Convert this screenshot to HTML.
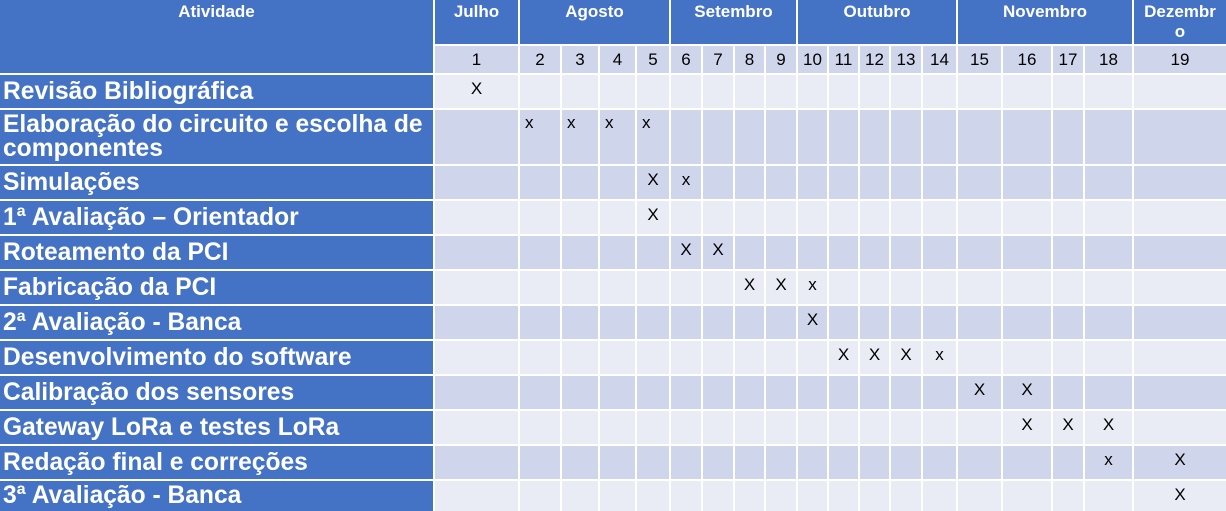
<!DOCTYPE html>
<html><head><meta charset="utf-8"><style>
html,body{margin:0;padding:0;background:#fff;width:1226px;height:511px;overflow:hidden}
.g{display:grid;gap:2px;background:#fff;
grid-template-columns:433px 83px 40px 36px 35px 32px 30px 30px 29px 30px 29px 29px 29px 30px 33px 43px 48px 30px 47px 92px;
grid-template-rows:44px 27px 33px 54px 33px 33px 33px 33px 33px 33px 33px 33px 33px 30px;
font-family:"Liberation Sans",sans-serif}
.g>div{display:flex;align-items:center;justify-content:center;font-size:17px;color:#000;overflow:hidden}
.h{background:#4472C4;color:#fff!important;font-weight:bold;align-items:flex-start!important;text-align:center;line-height:20px;padding-top:2px;box-sizing:border-box}
.a{background:#4472C4;color:#fff!important;font-weight:bold;font-size:24.6px!important;justify-content:flex-start!important;padding-left:3px;line-height:24px;white-space:nowrap}
.l{background:#E9EBF5}.d{background:#CFD5EA}
.lx{justify-content:flex-start!important;padding-left:5px}
</style></head><body>
<div class="g" id="g">
<div class="h" style="grid-row:1/3">Atividade</div>
<div class="h">Julho</div>
<div class="h" style="grid-column:span 4">Agosto</div>
<div class="h" style="grid-column:span 4">Setembro</div>
<div class="h" style="grid-column:span 5">Outubro</div>
<div class="h" style="grid-column:span 4">Novembro</div>
<div class="h">Dezembr<br>o</div>
</div>
<script>
var g=document.getElementById('g');
for(var i=1;i<=19;i++){var d=document.createElement('div');d.className='d';d.textContent=i;g.appendChild(d);}
var rows=[
["Revisão Bibliográfica",{1:"X"}],
["Elaboração do circuito e escolha de<br>componentes",{2:"x",3:"x",4:"x",5:"x"}],
["Simulações",{5:"X",6:"x"}],
["1ª Avaliação – Orientador",{5:"X"}],
["Roteamento da PCI",{6:"X",7:"X"}],
["Fabricação da PCI",{8:"X",9:"X",10:"x"}],
["2ª Avaliação - Banca",{10:"X"}],
["Desenvolvimento do software",{11:"X",12:"X",13:"X",14:"x"}],
["Calibração dos sensores",{15:"X",16:"X"}],
["Gateway LoRa e testes LoRa",{16:"X",17:"X",18:"X"}],
["Redação final e correções",{18:"x",19:"X"}],
["3ª Avaliação - Banca",{19:"X"}]];
var bg=['l','d','d','l','d','l','d','l','d','l','d','l'];
rows.forEach(function(r,k){
var a=document.createElement('div');a.className='a';a.innerHTML=r[0];g.appendChild(a);
for(var i=1;i<=19;i++){var c=document.createElement('div');c.className=bg[k];
var v=r[1][i];if(v){c.textContent=v;if(v=='x'&&k==1)c.className+=' lx';
c.style.alignItems='flex-start';c.style.paddingTop=(k==1?'3px':'4px');c.style.boxSizing='border-box';}
g.appendChild(c);}
});
</script>
</body></html>
